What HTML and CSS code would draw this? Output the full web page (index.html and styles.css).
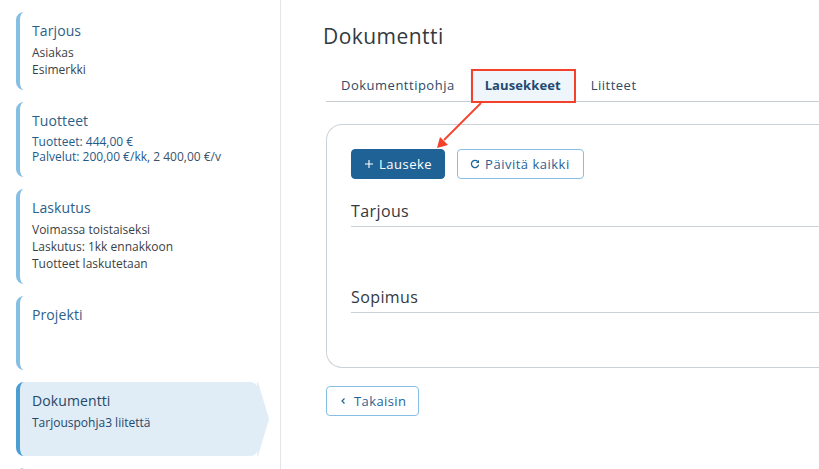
FILE: index.html
```html
<!DOCTYPE html>
<html lang="fi">
<head>
<meta charset="utf-8">
<title>Dokumentti</title>
<link rel="stylesheet" href="styles.css">
</head>
<body>
<div class="app">
  <aside class="sidebar">
    <section class="card h78">
      <h3 class="card-title">Tarjous</h3>
      <p class="line">Asiakas</p>
      <p class="line">Esimerkki</p>
    </section>
    <section class="card h75">
      <h3 class="card-title">Tuotteet</h3>
      <p class="line tight blue">Tuotteet: 444,00 €</p>
      <p class="line tight blue">Palvelut: 200,00 €/kk, <span class="dim">2 400,00 €/v</span></p>
    </section>
    <section class="card h95">
      <h3 class="card-title">Laskutus</h3>
      <p class="line">Voimassa toistaiseksi</p>
      <p class="line">Laskutus: 1kk ennakkoon</p>
      <p class="line">Tuotteet laskutetaan</p>
    </section>
    <section class="card h74">
      <h3 class="card-title">Projekti</h3>
    </section>
    <section class="card h74 active">
      <h3 class="card-title">Dokumentti</h3>
      <p class="line navy">Tarjouspohja3 liitettä</p>
      <svg class="tip" width="13" height="74" viewBox="0 0 13 74" aria-hidden="true"><path d="M0 0 L1 0 L12 37 L1 74 L0 74 Z" fill="#e0ecf6"/></svg>
    </section>
    <section class="card stub"></section>
  </aside>
  <main class="main">
    <h1 class="page-title">Dokumentti</h1>
    <nav class="tabs">
      <a class="tab">Dokumenttipohja</a>
      <a class="tab current">Lausekkeet</a>
      <a class="tab">Liitteet</a>
    </nav>
    <div class="panel">
      <div class="actions">
        <button class="btn primary"><svg class="ico" width="10" height="10" viewBox="0 0 10 10" aria-hidden="true"><path d="M5 1v8M1 5h8" stroke="#fff" stroke-width="1.1" fill="none"/></svg>Lauseke</button>
        <button class="btn outline"><svg class="ico" width="10" height="10" viewBox="0 0 10 10" aria-hidden="true"><path d="M8.6 5.6A3.6 3.6 0 1 1 7.6 2.4" stroke="#1f6396" stroke-width="1.3" fill="none"/><path d="M9 0.8V4H5.8Z" fill="#1f6396"/></svg>Päivitä kaikki</button>
      </div>
      <h2 class="section-title">Tarjous</h2>
      <div class="section-body"></div>
      <h2 class="section-title">Sopimus</h2>
    </div>
    <button class="btn outline back"><svg class="ico" width="8" height="10" viewBox="0 0 8 10" aria-hidden="true"><path d="M5.5 2.5 3 5l2.5 2.5" stroke="#1f6396" stroke-width="1.2" fill="none"/></svg>Takaisin</button>
    <div class="highlight"></div>
    <svg class="arrow" width="60" height="60" viewBox="0 0 60 60" aria-hidden="true">
      <path d="M45 3 L8 40" stroke="#f4412a" stroke-width="1.8" fill="none"/>
      <path d="M1 48 L4 37 L12 45 Z" fill="#f4412a"/>
    </svg>
  </main>
</div>
</body>
</html>
```
FILE: styles.css
```css
* { box-sizing: border-box; }
html, body { margin: 0; height: 100%; overflow: hidden; background: #fff; }
body { font-family: "Open Sans", "Noto Sans", sans-serif; color: #33393f; }
h1, h2, h3, p { margin: 0; font-weight: 400; }

.app { display: flex; width: 819px; height: 469px; overflow: hidden; }

.sidebar {
  flex: 0 0 281px;
  border-right: 1px solid #e3e5e8;
  padding: 12px 22px 0 16px;
  display: flex;
  flex-direction: column;
  gap: 12px;
}
.card {
  position: relative;
  flex: none;
  border-left: 4px solid #85bfe3;
  border-radius: 8px;
  padding: 9px 12px 0;
}
.h78 { height: 78px; }
.h75 { height: 75px; }
.h95 { height: 95px; }
.h74 { height: 74px; }
.stub { height: 20px; }
.card-title { font-size: 14px; line-height: 19px; color: #2c5f8a; margin-bottom: 4px; letter-spacing: 0.1px; }
.line { font-size: 12px; line-height: 17px; color: #3a3f45; }
.tight { line-height: 15px; }
.blue { color: #1f5a88; }
.dim { color: #3d5166; }
.navy { color: #24486a; }
.active { background: #e0ecf6; border-left-color: #4a9ed2; }
.active .card-title { color: #24486a; }
.tip { position: absolute; left: 237px; top: 0; }

.main { position: relative; flex: 1; min-width: 0; padding: 22px 0 0 45px; }
.page-title { font-size: 21px; line-height: 28px; color: #33393f; margin-left: -3px; letter-spacing: 0.45px; }
.tabs {
  display: flex;
  width: 560px;
  margin-top: 19px;
  height: 33px;
  border-bottom: 1px solid #c6cdd3;
}
.tab {
  font-size: 13px;
  line-height: 32px;
  padding: 0 15px;
  color: #2c4a66;
  letter-spacing: 0.5px;
}
.current {
  background: #eef5fb;
  font-weight: 700;
  color: #1f4a70;
  padding: 0 15px;
  letter-spacing: 0.1px;
}
.panel {
  width: 560px;
  height: 244px;
  margin-top: 22px;
  border: 1px solid #ccd3d8;
  border-right: 0;
  border-radius: 16px 0 0 16px;
  padding: 24px 0 0 24px;
}
.actions { display: flex; gap: 12px; }
.btn {
  display: inline-flex;
  align-items: center;
  gap: 5px;
  height: 30px;
  padding: 0 13px 0 12px;
  font: 400 13px "Open Sans", "Noto Sans", sans-serif;
  letter-spacing: 0.5px;
  border-radius: 4px;
}
.primary { background: #1f6396; border: 1px solid #1f6396; color: #fff; padding-right: 12px; }
.outline { background: #fff; border: 1px solid #85bfe3; color: #1f6396; }
.section-title {
  font-size: 16px;
  line-height: 24px;
  margin-top: 20px;
  padding-bottom: 3px;
  border-bottom: 1px solid #ccd3d8;
  color: #33393f;
  letter-spacing: 0.4px;
}
.section-body { height: 38px; }
.back { margin-top: 18px; gap: 7px; padding-right: 12px; letter-spacing: 0.4px; }

.highlight {
  position: absolute;
  left: 190px;
  top: 69px;
  width: 105px;
  height: 34px;
  border: 2px solid #f4412a;
}
.arrow { position: absolute; left: 155px; top: 100px; }
```
